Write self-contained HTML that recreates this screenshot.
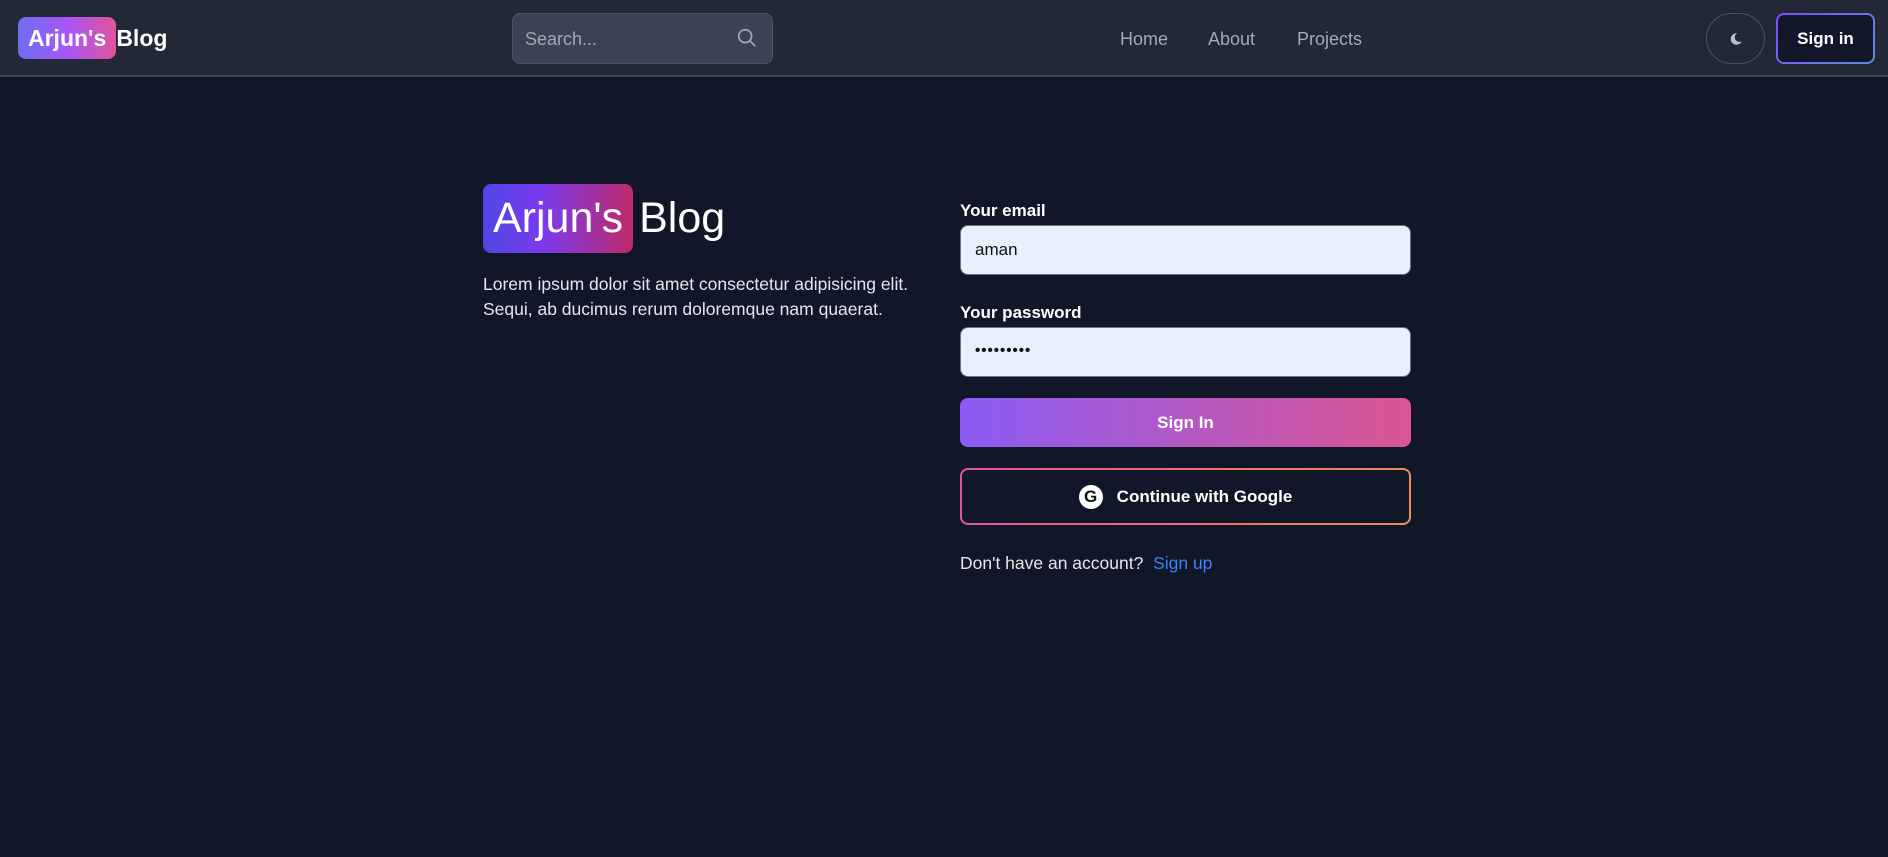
<!DOCTYPE html>
<html><head><meta charset="utf-8"><style>
*{box-sizing:border-box;margin:0;padding:0}
body{width:1888px;height:857px;background:#111729;font-family:"Liberation Sans",sans-serif;color:#fff;position:relative;overflow:hidden}
.nav{position:absolute;left:0;top:0;width:1888px;height:77px;background:#222836;border-bottom:2px solid #3b4251}
.abs{position:absolute}
.logo{left:18px;top:17px;height:42px;display:flex;align-items:center;font-weight:bold;font-size:23px}
.logo span.b{background:linear-gradient(90deg,#6b6ff0,#a855f7,#e0559a);border-radius:8px;padding:0 10px;height:42px;line-height:42px}
.search{left:512px;top:13px;width:261px;height:51px;background:#3b4252;border:1px solid #4b5363;border-radius:8px;color:#a0a7b4;font-size:18px;padding:15px 12px}
.link{top:29px;font-size:18px;color:#a3aab6}
.moon{left:1706px;top:13px;width:59px;height:51px;border:1px solid #4b5363;border-radius:26px}
.signin{left:1776px;top:13px;width:99px;height:51px;border-radius:8px;background:linear-gradient(135deg,#7c4dff,#5a8ee0);padding:2px}
.signin div{background:#111729;border-radius:6px;width:100%;height:100%;text-align:center;line-height:47px;font-weight:bold;font-size:17px}
.hlogo{left:483px;top:184px;height:69px;display:flex;align-items:center;font-size:43px}
.hlogo .b{background:linear-gradient(90deg,#4f46e5,#7c3aed 40%,#be2a6a);border-radius:8px;padding:0 10px;height:69px;line-height:69px;margin-right:6px}
.lorem{left:483px;top:272px;font-size:17.5px;line-height:25px;color:#e5e7eb}
.lbl{left:960px;font-weight:bold;font-size:17px}
.inp{left:960px;width:451px;height:50px;background:#e8f0fe;border:1px solid #6b7280;border-radius:8px;color:#111;font-size:17px;padding:14px 14px}
.btn{left:960px;top:398px;width:451px;height:49px;border-radius:8px;background:linear-gradient(90deg,#8b5cf6,#db5591);text-align:center;line-height:49px;font-weight:bold;font-size:17px}
.g{left:960px;top:468px;width:451px;height:57px;border-radius:8px;background:linear-gradient(90deg,#e0578f,#f08c5c);padding:2px}
.g div{background:#111729;border-radius:6px;height:100%;display:flex;align-items:center;justify-content:center;font-weight:bold;font-size:17px}
.gi{width:24px;height:24px;border-radius:50%;background:#fff;color:#111;font-weight:bold;font-size:17px;text-align:center;line-height:24px;margin-right:14px}
</style></head><body>
<div class="nav">
<div class="abs logo"><span class="b">Arjun's</span><span>Blog</span></div>
<div class="abs search">Search...
<svg style="position:absolute;right:14px;top:13px" width="22" height="22" viewBox="0 0 24 24" fill="none" stroke="#a0a7b4" stroke-width="2"><circle cx="10" cy="10" r="7"/><path d="M15 15l6 6"/></svg></div>
<div class="abs link" style="left:1120px">Home</div>
<div class="abs link" style="left:1208px">About</div>
<div class="abs link" style="left:1297px">Projects</div>
<div class="abs moon"><svg style="position:absolute;left:22px;top:18px" width="14" height="14" viewBox="0 0 24 24"><path d="M14 2A10 10 0 1 0 22 16 8 8 0 0 1 14 2z" fill="#b8bec9"/></svg></div>
<div class="abs signin"><div>Sign in</div></div>
</div>
<div class="abs hlogo"><span class="b">Arjun's</span><span>Blog</span></div>
<div class="abs lorem">Lorem ipsum dolor sit amet consectetur adipisicing elit.<br>Sequi, ab ducimus rerum doloremque nam quaerat.</div>
<div class="abs lbl" style="top:201px">Your email</div>
<div class="abs inp" style="top:225px">aman</div>
<div class="abs lbl" style="top:303px">Your password</div>
<div class="abs inp" style="top:327px;font-size:15px;letter-spacing:1px;font-weight:bold">•••••••••</div>
<div class="abs btn">Sign In</div>
<div class="abs g"><div><span class="gi">G</span>Continue with Google</div></div>
<div class="abs" style="left:960px;top:553px;font-size:17.5px;color:#e5e7eb">Don't have an account? &nbsp;<span style="color:#3b82f6">Sign up</span></div>
</body></html>
